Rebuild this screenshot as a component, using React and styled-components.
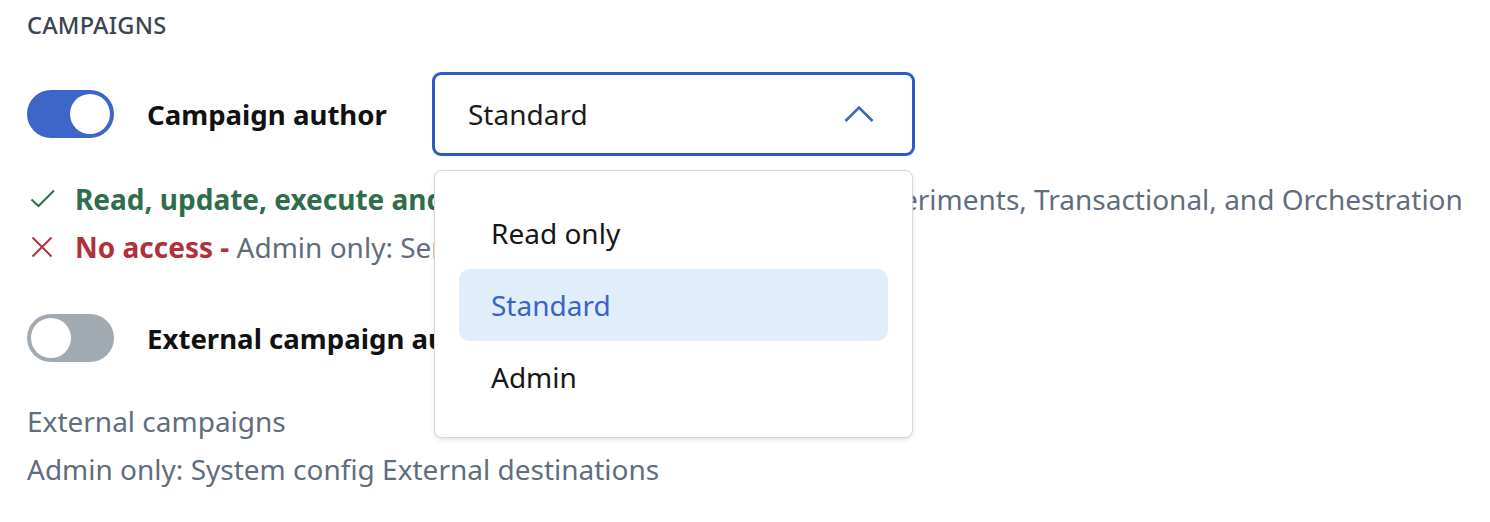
import React from 'react';
import styled, { createGlobalStyle } from 'styled-components';

const GlobalStyle = createGlobalStyle`
  html, body {
    margin: 0;
    padding: 0;
    background: #ffffff;
  }
  body {
    font-family: 'Noto Sans', 'Open Sans', sans-serif;
    -webkit-font-smoothing: antialiased;
  }
`;

const Page = styled.div`
  padding: 8px 27px 0 27px;
  width: 1490px;
  height: 522px;
  box-sizing: border-box;
  overflow: hidden;
`;

const SectionTitle = styled.h2`
  margin: 0;
  font-size: 23.6px;
  line-height: 34px;
  font-weight: 500;
  color: #3b4450;
  letter-spacing: 0.2px;
`;

const PermissionRow = styled.div`
  display: flex;
  align-items: center;
  height: 84px;
  margin-top: ${(p) => p.$top}px;
`;

const Track = styled.button`
  position: relative;
  flex: none;
  width: 87px;
  height: 48px;
  padding: 0;
  border: none;
  border-radius: 24px;
  background: ${(p) => (p.$on ? '#3c66c8' : '#a1a9b1')};
  cursor: pointer;
`;

const Knob = styled.span`
  position: absolute;
  top: 4px;
  left: ${(p) => (p.$on ? '43px' : '4px')};
  width: 40px;
  height: 40px;
  border-radius: 50%;
  background: #ffffff;
`;

const Label = styled.span`
  margin-left: 33px;
  width: 285px;
  flex: none;
  font-size: 27.6px;
  font-weight: 700;
  color: #111111;
  white-space: nowrap;
`;

const SelectWrap = styled.div`
  position: relative;
  flex: none;
`;

const SelectBox = styled.div`
  display: flex;
  align-items: center;
  justify-content: space-between;
  box-sizing: border-box;
  width: 483px;
  height: 84px;
  padding: 0 38px 0 33px;
  border: 3px solid #2a5cc7;
  border-radius: 9px;
  font-size: 28px;
  color: #1a1a1a;
  background: #ffffff;
`;

const Menu = styled.ul`
  position: absolute;
  top: 98px;
  left: 2px;
  z-index: 2;
  box-sizing: border-box;
  width: 479px;
  margin: 0;
  padding: 26px 24px 24px 24px;
  list-style: none;
  background: #ffffff;
  border: 1.5px solid #d3d8de;
  border-radius: 8px;
  box-shadow: 0 2px 4px rgba(30, 40, 60, 0.12);
`;

const MenuItem = styled.li`
  height: 72px;
  display: flex;
  align-items: center;
  padding-left: 32px;
  border-radius: 11px;
  font-size: 28px;
  color: ${(p) => (p.$active ? '#3a63c6' : '#161616')};
  background: ${(p) => (p.$active ? '#e0edfa' : 'transparent')};
`;

const Details = styled.div`
  margin-top: ${(p) => p.$top}px;
`;

const Line = styled.div`
  display: flex;
  align-items: center;
  font-size: 28px;
  line-height: 48px;
  color: #5f6d7e;
  white-space: nowrap;
`;

const IconSlot = styled.span`
  display: inline-flex;
  width: 48px;
  flex: none;
  align-items: center;
`;

const Strong = styled.span`
  font-weight: 700;
  color: ${(p) => p.$tone};
`;

const Check = () => (
  <svg width="26" height="20" viewBox="0 0 26 20" style={{ marginLeft: 3 }}>
    <path d="M1.5 10.5 L8.5 17 L24 1.5" fill="none" stroke="#2f6e4b" strokeWidth="2" />
  </svg>
);

const Cross = () => (
  <svg width="22" height="22" viewBox="0 0 22 22" style={{ marginLeft: 4 }}>
    <path d="M1.5 1.5 L20.5 20.5 M20.5 1.5 L1.5 20.5" fill="none" stroke="#b3333b" strokeWidth="2" />
  </svg>
);

const ChevronUp = () => (
  <svg width="30" height="18" viewBox="0 0 30 18">
    <path d="M1.5 16 L15 2.5 L28.5 16" fill="none" stroke="#3c66c8" strokeWidth="2.6" />
  </svg>
);

const Toggle = ({ on }) => (
  <Track $on={on} type="button" aria-pressed={on}>
    <Knob $on={on} />
  </Track>
);

const options = ['Read only', 'Standard', 'Admin'];

export default function App() {
  return (
    <>
      <GlobalStyle />
      <Page>
        <SectionTitle>CAMPAIGNS</SectionTitle>
        <PermissionRow $top={30}>
          <Toggle on />
          <Label>Campaign author</Label>
          <SelectWrap>
            <SelectBox>
              <span>Standard</span>
              <ChevronUp />
            </SelectBox>
            <Menu>
              {options.map((o) => (
                <MenuItem key={o} $active={o === 'Standard'}>
                  {o}
                </MenuItem>
              ))}
            </Menu>
          </SelectWrap>
        </PermissionRow>
        <Details $top={19}>
          <Line>
            <IconSlot>
              <Check />
            </IconSlot>
            <Strong $tone="#2f6e4b">Read, update, execute and delete -&nbsp;</Strong>
            Campaigns, Journeys, Experiments, Transactional, and Orchestration
          </Line>
          <Line>
            <IconSlot>
              <Cross />
            </IconSlot>
            <Strong $tone="#b0313a">No access -&nbsp;</Strong>
            Admin only: Sender profiles
          </Line>
        </Details>
        <PermissionRow $top={25}>
          <Toggle on={false} />
          <Label>External campaign author</Label>
        </PermissionRow>
        <Details $top={17}>
          <Line>External campaigns</Line>
          <Line>Admin only: System config External destinations</Line>
        </Details>
      </Page>
    </>
  );
}
